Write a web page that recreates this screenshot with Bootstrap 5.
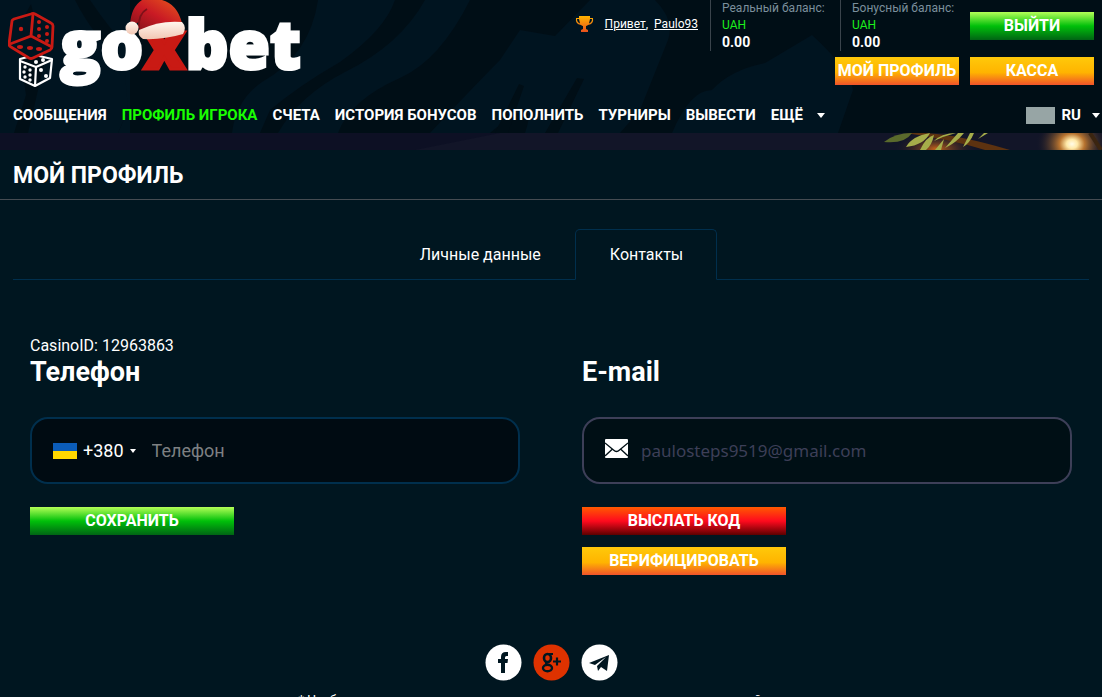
<!DOCTYPE html>
<html lang="ru">
<head>
<meta charset="utf-8">
<meta name="viewport" content="width=device-width, initial-scale=1">
<title>Мой профиль</title>
<link href="https://cdn.jsdelivr.net/npm/bootstrap@5.3.0/dist/css/bootstrap.min.css" rel="stylesheet">
<style>
  html { scrollbar-width: none; }
  body { background: #001620; color: #fff; font-family: Roboto, "Liberation Sans", sans-serif; font-size: 16px; line-height: 20px; overflow-x: hidden; }
  .site-head { background: #000e16; position: relative; padding: 0 8px; }
  .head-bg { position: absolute; inset: 0; width: 100%; height: 100%; }
  .head-row, .main-menu { position: relative; }
  .head-row { min-height: 97px; }
  .hello { font-size: 12px; line-height: 16px; padding: 16px 12px 0 0; gap: 10px; }
  .hello a { color: #fff; }
  .balance { width: 130px; height: 51px; border-left: 1px solid #3a444c; padding-left: 11px; font-size: 12px; line-height: 17px; color: #7b8f9c; white-space: nowrap; }
  .balance .cur { color: #1cf01c; }
  .balance .sum { color: #fff; font-size: 14px; font-weight: 700; }
  .act { border: 0; border-radius: 0; height: 28px; padding: 0; color: #fff; font-size: 16px; line-height: 28px; font-weight: 700; white-space: nowrap; text-align: center; text-decoration: none; display: block; }
  .act-s { width: 124px; }
  .act-m { width: 204px; }
  .act-green { background: linear-gradient(#b4ff57 0%, #00c00a 50%, #006414 100%); }
  .act-gold { background: linear-gradient(#ffc90a 0%, #ffb400 55%, #f0532a 100%); }
  .act-red { background: linear-gradient(#ff5a00 0%, #ff0a1e 50%, #5c0000 100%); }
  .head-actions { gap: 11px; padding-top: 6px; }
  .form-actions { gap: 12px; padding-top: 23px; }
  .main-menu { height: 36px; padding: 0 5px; gap: 15px; font-size: 15px; font-weight: 700; white-space: nowrap; }
  .main-menu a { color: #fff; text-decoration: none; }
  .main-menu a.current { color: #1aff00; }
  .main-menu .more { gap: 14px; }
  .main-menu .lang { margin-right: -11px; gap: 7px; }
  .arrow { display: inline-block; border: 4px solid transparent; border-top: 5px solid #fff; border-bottom: 0; }
  .flag-box { width: 29px; height: 17px; background: #97a5a5; }
  .promo { height: 17px; background: #0d1024; overflow: hidden; }
  .page-title { height: 50px; border-bottom: 1px solid #454c52; padding: 2px 13px 0; }
  .page-title h1 { font-size: 23px; line-height: 28px; font-weight: 700; margin: 0; }
  .tabs-line { margin: 29px 13px 0; border-bottom: 1px solid #002f4d; }
  .tabs-line .nav-link { color: #fff; border: 1px solid transparent; border-radius: 5px 5px 0 0; padding: 15px 33px 14px 34px; line-height: 20px; margin-bottom: -1px; }
  .tabs-line .nav-link.active { background: #001620; border-color: #002f4d #002f4d #001620; color: #fff; }
  .forms { padding: 56px 30px 0; overflow: hidden; }
  .forms .row { --bs-gutter-x: 62px; }
  .forms h2 { font-size: 27px; line-height: 32px; font-weight: 700; margin: 0 0 29px; }
  .idline { height: 20px; }
  .field { height: 67px; border: 2px solid #002f4d; border-radius: 18px; background: #000b12; padding: 0 21px; }
  .field-mail { border-color: #3d3f58; background: #000f15; gap: 13px; }
  .field input { background: none; border: 0; outline: 0; color: #fff; font-family: Roboto, sans-serif; font-size: 18px; min-width: 0; padding: 0; height: 40px; }
  .field input::placeholder { color: #7d8082; opacity: 1; }
  .field-mail input { color: #3d3f58; font-family: "Noto Sans", sans-serif; font-size: 17px; }
  .code { background: none; border: 0; color: #fff; font-size: 18px; line-height: 24px; padding: 0; gap: 6px; }
  .code .arrow { border-width: 4px 3px 0; }
  .socials { gap: 11px; margin-top: 69px; }
  .note { font-size: 13px; line-height: 18px; padding: 10px 0 12px; }
</style>
</head>
<body>
<header class="site-head">
  <svg class="head-bg" viewBox="0 0 1102 133" preserveAspectRatio="none" aria-hidden="true">
    <g fill="#001420">
      <path d="M0 0H34Q18 20 20 55L26 95L14 133H0Z"/>
      <path d="M45 0H130V133H118L128 110L112 30Q100 15 90 0Z"/>
      <path d="M28 133L45 60L30 0H75Q95 40 124 60L128 110L118 133Z"/>
      <path d="M318 0H395Q385 30 340 62Q300 85 270 110L260 133H232Q236 100 262 82Q310 55 318 0Z"/>
      <path d="M470 0Q440 60 400 78Q350 100 338 133H278Q300 95 345 72Q400 45 425 0Z"/>
      <path d="M555 36L590 0H655Q675 20 668 40L640 110L620 133H525Q540 90 490 133H430Q480 80 500 60L520 30Z"/>
      <path d="M672 133Q690 90 712 90Q730 70 765 63L812 35Q850 70 853 90L838 133Z"/>
    </g>
    <path fill="#000e16" d="M545 133L577 78L584 79L558 133ZM495 133L519 84L524 86L508 133Z"/>
  </svg>
  <div class="head-row d-flex align-items-start">
    <a href="#" aria-label="goxbet" class="d-block">
      <svg width="300" height="92" viewBox="8 0 300 92" class="d-block">
        <defs>
          <linearGradient id="hat" x1="0" y1="1" x2="1" y2="0"><stop offset="0" stop-color="#7d1119"/><stop offset=".5" stop-color="#c91a24"/><stop offset="1" stop-color="#e8581c"/></linearGradient>
          <linearGradient id="fur" x1="0" y1="0" x2="0" y2="1"><stop offset="0" stop-color="#fff6ee"/><stop offset="1" stop-color="#f2c7b4"/></linearGradient>
        </defs>
        <g fill="none" stroke="#fff" stroke-width="2.2" stroke-linejoin="round">
          <path d="M20 59L35 55L52 59L50 78L35 86L20 79Z"/><path d="M20 61L36 67L52 60M36 67L35 86"/>
        </g>
        <g fill="#fff"><circle cx="25" cy="67" r="1.7"/><circle cx="30" cy="70" r="1.7"/><circle cx="24" cy="72" r="1.7"/><circle cx="30" cy="75" r="1.7"/><circle cx="25" cy="77" r="1.7"/><circle cx="30" cy="80" r="1.7"/><circle cx="41" cy="70" r="2"/><circle cx="46" cy="76" r="2"/><circle cx="36" cy="62" r="2"/><circle cx="43" cy="60" r="2"/></g>
        <path fill="#001420" stroke="#c91a14" stroke-width="2.8" stroke-linejoin="round" d="M12 21Q12 20 14 19L31 14Q33 13 35 14L51 23Q53 24 53 26L52 47Q52 49 50 50L33 58Q31 59 29 58L11 47Q9 46 9 44Z"/>
        <path fill="none" stroke="#c91a14" stroke-width="2.8" stroke-linejoin="round" d="M33 14L31 36L10 44M31 36L52 47"/>
        <g fill="#c91a14"><circle cx="21" cy="29" r="2.2"/><circle cx="39" cy="22" r="2"/><circle cx="39" cy="29" r="2"/><circle cx="39" cy="36" r="2"/><circle cx="47" cy="27" r="2"/><circle cx="47" cy="34" r="2"/><circle cx="47" cy="41" r="2"/><ellipse cx="20" cy="47" rx="3" ry="1.9"/><ellipse cx="30" cy="48" rx="3" ry="1.9"/><ellipse cx="39" cy="49" rx="3" ry="1.9"/></g>
        <text x="60" y="69" font-family="Open Sans" font-weight="800" font-size="67" fill="#fff" stroke="#fff" stroke-width="3">go<tspan fill="#c91a14" stroke="#c91a14">x</tspan>bet</text>
        <path fill="url(#hat)" d="M130 25Q131 7 142 0H162Q177 4 182 23Q165 20 139 31Q141 20 137 23Z"/>
        <path fill="none" stroke="#7d1119" stroke-width="2" d="M139 28Q138 14 147 9"/>
        <path fill="url(#fur)" d="M139 30Q160 20 182 22Q187 27 183 34Q163 40 143 39Q137 35 139 30Z"/>
        <circle cx="132" cy="28" r="6.5" fill="url(#fur)"/>
      </svg>
    </a>
    <div class="ms-auto">
      <div class="d-flex">
        <div class="hello d-flex align-items-start">
          <svg width="20" height="16" viewBox="0 0 20 16" aria-hidden="true"><defs><linearGradient id="cup" x1="0" y1="0" x2="0" y2="1"><stop offset="0" stop-color="#ffb400"/><stop offset="1" stop-color="#e8501c"/></linearGradient></defs><path fill="url(#cup)" fill-rule="evenodd" d="M4 0H15V2H18Q19 8 13 9Q12 10 11 10V13L13 14V16H6V14L8 13V10Q7 10 6 9Q0 8 1 2H4ZM4 3H2Q2 6 5 7.500ZM15 3H17Q17 6 14 7.500Z"/></svg>
          <span><a href="#">Привет</a>,&nbsp; <a href="#">Paulo93</a></span>
        </div>
        <div class="balance">Реальный баланс:<div class="cur">UAH</div><div class="sum">0.00</div></div>
        <div class="balance">Бонусный баланс:<div class="cur">UAH</div><div class="sum">0.00</div></div>
        <div class="pt-1 mt-2"><button type="button" class="act act-s act-green">ВЫЙТИ</button></div>
      </div>
      <div class="head-actions d-flex justify-content-end">
        <a href="#" class="act act-s act-gold">МОЙ ПРОФИЛЬ</a>
        <a href="#" class="act act-s act-gold">КАССА</a>
      </div>
    </div>
  </div>
  <nav class="main-menu d-flex align-items-center">
    <a href="#">СООБЩЕНИЯ</a>
    <a href="#" class="current">ПРОФИЛЬ ИГРОКА</a>
    <a href="#">СЧЕТА</a>
    <a href="#">ИСТОРИЯ БОНУСОВ</a>
    <a href="#">ПОПОЛНИТЬ</a>
    <a href="#">ТУРНИРЫ</a>
    <a href="#">ВЫВЕСТИ</a>
    <a href="#" class="more d-flex align-items-center">ЕЩЁ <span class="arrow"></span></a>
    <a href="#" class="lang ms-auto d-flex align-items-center"><span class="flag-box"></span>RU <span class="arrow ms-1"></span></a>
  </nav>
</header>
<div class="promo">
  <svg width="100%" height="17" viewBox="0 0 1102 17" preserveAspectRatio="none" class="d-block" aria-hidden="true">
    <defs>
      <radialGradient id="lamp"><stop offset="0" stop-color="#fffbe8"/><stop offset=".15" stop-color="#ffe9a8"/><stop offset=".35" stop-color="#b87430"/><stop offset="1" stop-color="#121528" stop-opacity="0"/></radialGradient>
      <radialGradient id="glow"><stop offset="0" stop-color="#c8641a"/><stop offset="1" stop-color="#121528" stop-opacity="0"/></radialGradient>
    </defs>
    <path fill="#121528" d="M415 17L500 0H1102V17Z"/>
    <ellipse cx="936" cy="16" rx="42" ry="18" fill="url(#glow)"/>
    <path fill="#5d3210" d="M905 0H925Q960 2 1010 17H985Q950 6 905 0Z"/>
    <path fill="#5a6a2c" d="M884 9Q895 0 912 0Q905 11 884 9Z"/>
    <g fill="#a5ad4a">
      <path d="M906 14Q912 3 930 0Q924 12 906 14ZM920 17Q926 4 934 2Q932 12 926 17ZM935 17L944 6L941 17ZM934 8Q942 0 956 0Q944 3 934 8ZM945 15L958 0H964Q956 10 945 15ZM963 14L970 0H974Q970 10 963 14ZM978 6L984 0H988Z"/>
    </g>
    <ellipse cx="1072" cy="11" rx="36" ry="30" fill="url(#lamp)"/>
    <path stroke="#3b2510" stroke-width="4" d="M1090 0L1101 17"/>
  </svg>
</div>
<div class="page-title d-flex align-items-center"><h1>МОЙ ПРОФИЛЬ</h1></div>
<main>
  <ul class="nav tabs-line justify-content-center">
    <li class="nav-item"><a class="nav-link" href="#">Личные данные</a></li>
    <li class="nav-item"><a class="nav-link active" href="#" aria-current="page">Контакты</a></li>
  </ul>
  <form class="forms">
    <div class="row">
      <div class="col-6">
        <div class="idline">CasinoID: 12963863</div>
        <h2><label for="phone">Телефон</label></h2>
        <div class="field d-flex align-items-center">
          <button type="button" class="code d-flex align-items-center"><svg width="24" height="16" viewBox="0 0 24 16" aria-hidden="true"><path fill="#0b5cb8" d="M0 0H24V8H0Z"/><path fill="#ffd800" d="M0 8H24V16H0Z"/></svg>+380<span class="arrow"></span></button>
          <input id="phone" type="tel" class="flex-grow-1 ms-3" placeholder="Телефон">
        </div>
        <div class="form-actions d-flex flex-column align-items-start">
          <button type="button" class="act act-m act-green">СОХРАНИТЬ</button>
        </div>
      </div>
      <div class="col-6">
        <div class="idline"></div>
        <h2><label for="mail">E-mail</label></h2>
        <div class="field field-mail d-flex align-items-center">
          <svg width="23" height="19" viewBox="0 0 23 19" class="mb-1" aria-hidden="true"><path fill="#fff" d="M1 0H22Q23 0 23 1V18Q23 19 22 19H1Q0 19 0 18V1Q0 0 1 0Z"/><path fill="none" stroke="#000f15" stroke-width="1.3" d="M0 4L8.500 11Q11.500 14 14.500 11L23 4M0 17L7.500 10M23 17L15.500 10"/></svg>
          <input id="mail" type="email" class="flex-grow-1" value="paulosteps9519@gmail.com">
        </div>
        <div class="form-actions d-flex flex-column align-items-start">
          <button type="button" class="act act-m act-red">ВЫСЛАТЬ КОД</button>
          <button type="button" class="act act-m act-gold">ВЕРИФИЦИРОВАТЬ</button>
        </div>
      </div>
    </div>
  </form>
</main>
<footer>
  <div class="socials d-flex justify-content-center">
    <a href="#" aria-label="Facebook"><svg width="37" height="37" viewBox="0 0 37 37" class="d-block"><circle cx="18.500" cy="18.500" r="18" fill="#fff"/><path fill="#001620" d="M16 29V19H13V15H16V13Q16 8 21 8H23V12H21.500Q20 12 20 13.500V15H23L22.500 19H20V29Z"/></svg></a>
    <a href="#" aria-label="Google+"><svg width="37" height="37" viewBox="0 0 37 37" class="d-block"><circle cx="18.500" cy="18.500" r="18" fill="#de3200"/><g fill="none" stroke="#001620"><ellipse cx="14.500" cy="14" rx="3.500" ry="4" stroke-width="2.600"/><ellipse cx="14.500" cy="24" rx="4.500" ry="3.200" stroke-width="2.400"/><path stroke-width="2" d="M14 10H20M13 18Q12 20 16 21"/><path stroke-width="2.200" d="M20 17.500H28M24 13.500V21.500"/></g></svg></a>
    <a href="#" aria-label="Telegram"><svg width="37" height="37" viewBox="0 0 37 37" class="d-block"><circle cx="18.500" cy="18.500" r="18" fill="#fff"/><path fill="#001620" d="M8 19L28 11L26 27L20 23L17 27L16 22L25 13L14 21Z"/></svg></a>
  </div>
  <p class="note text-center m-0">* Чтобы получать новости и акции казино, заполните все данные и личный номер</p>
</footer>
<script src="https://cdn.jsdelivr.net/npm/bootstrap@5.3.0/dist/js/bootstrap.bundle.min.js"></script>
</body>
</html>
